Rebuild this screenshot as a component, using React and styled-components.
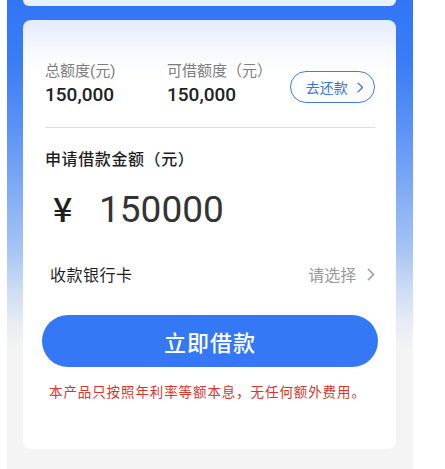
import React from 'react';
import styled, { createGlobalStyle } from 'styled-components';

const GlobalStyle = createGlobalStyle`
  body {
    margin: 0;
    background: #ffffff;
    font-family: Roboto, "Noto Sans CJK SC", sans-serif;
    text-spacing-trim: space-all;
  }
`;

const Chevron = ({ color, size = 10 }) => (
  <svg width={size * 0.6} height={size} viewBox="0 0 6 10" fill="none">
    <polyline points="1,1 5,5 1,9" stroke={color} strokeWidth="1.2" strokeLinecap="round" strokeLinejoin="round" />
  </svg>
);

const LoanApply = () => {
  return (
    <Page>
      <GlobalStyle />
      <TopCard />
      <MainCard>
        <Summary>
          <Stat>
            <StatLabel>总额度(元)</StatLabel>
            <StatValue>150,000</StatValue>
          </Stat>
          <Stat wide>
            <StatLabel>可借额度（元）</StatLabel>
            <StatValue>150,000</StatValue>
          </Stat>
          <RepayBtn>
            去还款
            <Chevron color='#3b72dc' size={11} />
          </RepayBtn>
        </Summary>
        <Divider />
        <SectionTitle>申请借款金额（元）</SectionTitle>
        <AmountRow>
          <Yen>¥</Yen>
          <Amount>150000</Amount>
        </AmountRow>
        <CardRow>
          <CardLabel>收款银行卡</CardLabel>
          <CardPick>
            请选择
            <Chevron color='#9a9a9a' size={13} />
          </CardPick>
        </CardRow>
        <SubmitBtn>立即借款</SubmitBtn>
        <Notice>本产品只按照年利率等额本息，无任何额外费用。</Notice>
      </MainCard>
    </Page>
  );
};

const Page = styled.div`
  width: 406px;
  height: 469px;
  margin-left: 7px;
  overflow: hidden;
  background: linear-gradient(
    180deg,
    #3276f6 0px,
    #3a7cf6 60px,
    #5c93f6 130px,
    #86b0f6 200px,
    #a6c4f4 250px,
    #cdddf3 290px,
    #e9edf4 325px,
    #f4f4f4 350px
  );
`;
const TopCard = styled.div`
  height: 6px;
  margin: 0 17px 0 16px;
  background: #eaf1fc;
  border-radius: 0 0 8px 8px;
`;
const MainCard = styled.div`
  height: 429px;
  margin: 14px 17px 0 16px;
  box-sizing: border-box;
  padding: 41px 21px 0 22px;
  border-radius: 8px;
  background: linear-gradient(180deg, #e2ecfb 0px, #f5f8fd 28px, #ffffff 55px);
`;
const Summary = styled.div`
  display: flex;
  align-items: flex-start;
`;
const Stat = styled.div`
  display: flex;
  flex-direction: column;
  width: ${({ wide }) => (wide ? '123px' : '122px')};
`;
const StatLabel = styled.div`
  font-size: 15px;
  line-height: 20px;
  color: #7e7e7e;
  white-space: nowrap;
`;
const StatValue = styled.div`
  margin-top: 2px;
  font-size: 19px;
  line-height: 24px;
  font-weight: 500;
  color: #222222;
`;
const RepayBtn = styled.button`
  margin: 10px 0 0 auto;
  width: 85px;
  height: 32px;
  box-sizing: border-box;
  display: flex;
  align-items: center;
  justify-content: center;
  gap: 9px;
  padding: 0 0 0 4px;
  border: 1px solid #3f7be0;
  border-radius: 16px;
  background: #ffffff;
  color: #3b72dc;
  font-family: inherit;
  font-size: 14px;
`;
const Divider = styled.div`
  height: 1px;
  margin-top: 20px;
  background: #dcdcdc;
`;
const SectionTitle = styled.div`
  margin-top: 22px;
  font-size: 16px;
  line-height: 20px;
  font-weight: 500;
  letter-spacing: 0.6px;
  color: #1f1f1f;
`;
const AmountRow = styled.div`
  display: flex;
  align-items: baseline;
  margin-top: 16px;
  height: 44px;
`;
const Yen = styled.span`
  display: inline-block;
  width: 46px;
  padding-left: 8px;
  font-family: "Noto Sans CJK SC", sans-serif;
  font-size: 34px;
  line-height: 44px;
  font-weight: 500;
  color: #1f1f1f;
`;
const Amount = styled.span`
  font-size: 37px;
  line-height: 44px;
  color: #333333;
`;
const CardRow = styled.div`
  display: flex;
  align-items: center;
  justify-content: space-between;
  margin-top: 32px;
  padding-left: 5px;
  height: 24px;
`;
const CardLabel = styled.span`
  font-size: 16px;
  letter-spacing: 0.5px;
  color: #1f1f1f;
`;
const CardPick = styled.span`
  display: flex;
  align-items: center;
  gap: 11px;
  font-size: 16px;
  color: #9a9a9a;
`;
const SubmitBtn = styled.button`
  display: block;
  margin: 29px 0 0 -3px;
  width: 336px;
  height: 52px;
  border: none;
  border-radius: 26px;
  background: #3478f6;
  color: #ffffff;
  font-family: inherit;
  font-size: 22px;
  font-weight: 500;
  letter-spacing: 1px;
`;
const Notice = styled.div`
  margin-top: 15px;
  padding-left: 4px;
  font-family: "Noto Sans CJK SC", sans-serif;
  font-size: 13.5px;
  line-height: 18px;
  letter-spacing: 0.9px;
  color: #d8352c;
  white-space: nowrap;
`;

export default LoanApply;
